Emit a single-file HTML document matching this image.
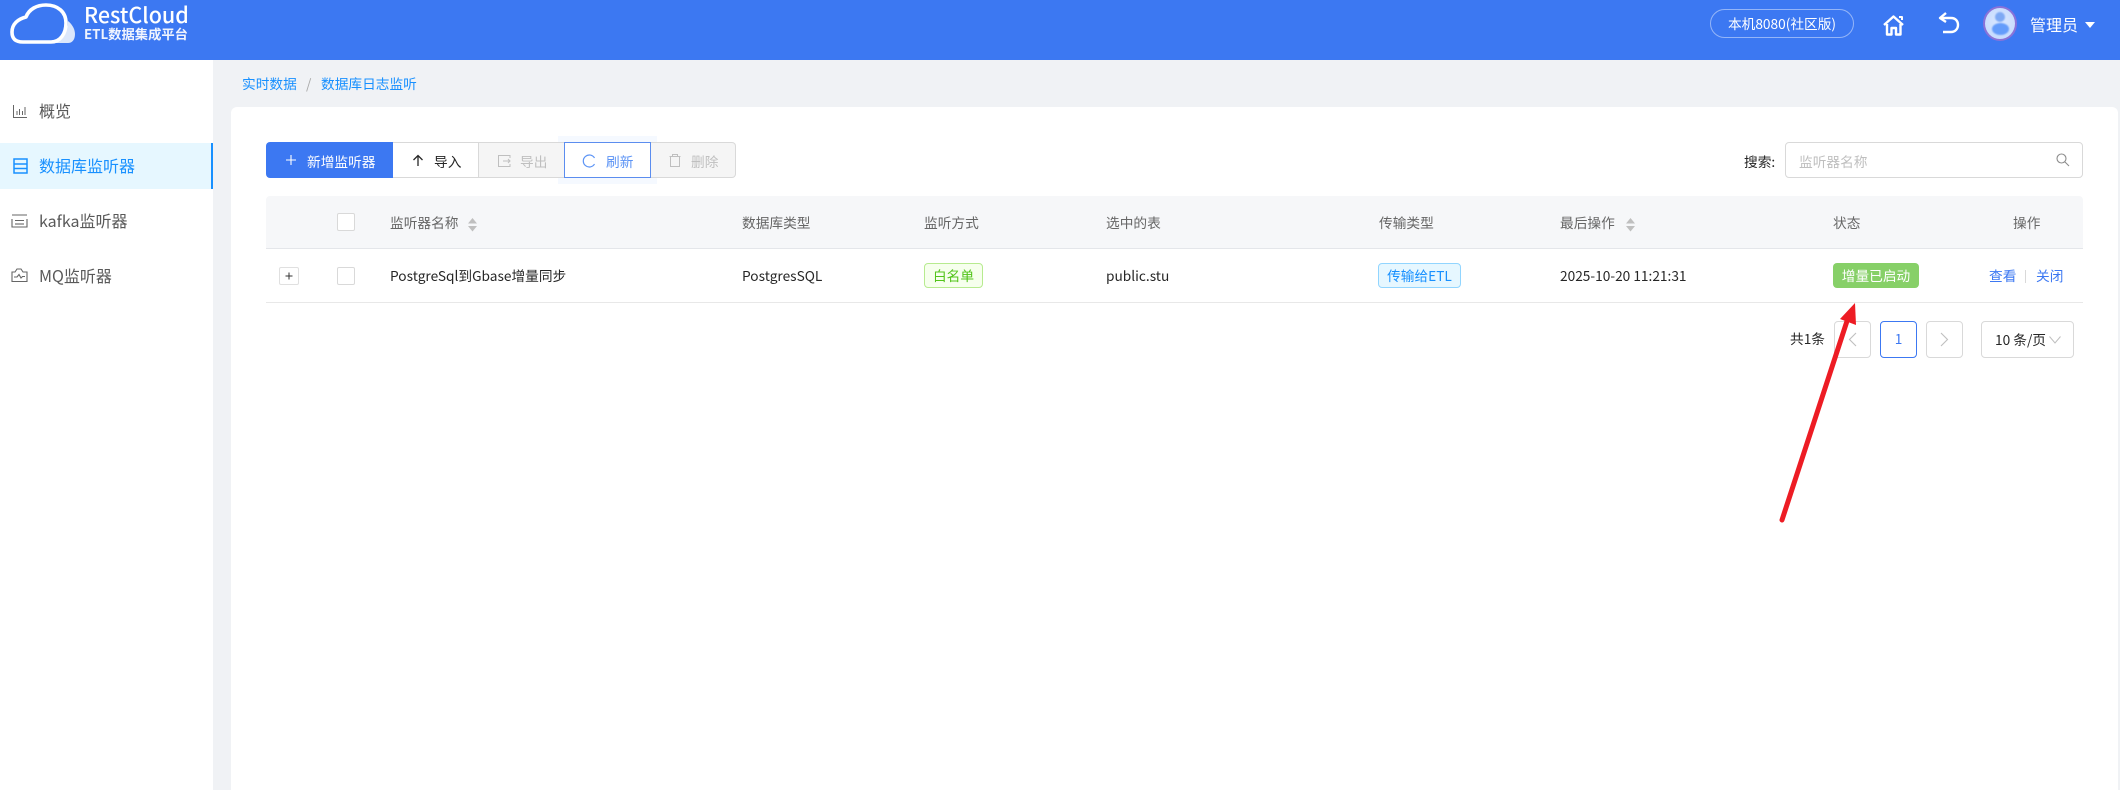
<!DOCTYPE html>
<html lang="zh-CN">
<head>
<meta charset="utf-8">
<title>数据库日志监听</title>
<style>
html,body{margin:0;padding:0;width:2120px;height:790px;overflow:hidden;background:#f0f2f5;}
body{position:relative;font-family:"Noto Sans CJK SC","Liberation Sans",sans-serif;font-size:13.7px;color:#262626;}
.a{position:absolute;box-sizing:border-box;}
.t{position:absolute;white-space:nowrap;line-height:20px;height:20px;}
svg{position:absolute;overflow:visible;}
.h{color:#666;}
.cb{position:absolute;box-sizing:border-box;width:18px;height:18px;border:1px solid #d9d9d9;border-radius:2px;background:#fff;}
.tag{position:absolute;box-sizing:border-box;height:25px;line-height:23px;border-radius:4px;text-align:center;white-space:nowrap;}
.pg{position:absolute;box-sizing:border-box;height:37px;border:1px solid #d9d9d9;border-radius:4px;background:#fff;}
.m{font-size:16px;color:#595959;}
</style>
</head>
<body>
<!-- header -->
<div class="a" style="left:0;top:0;width:2120px;height:60px;background:#3c78f2;"></div>
<svg style="left:1px;top:1px" width="200" height="60" viewBox="0 0 200 60">
  <path d="M67 20 C72 24 74 29 74 33 C74 39 71 42 67 42 H50 C60 41 67 32 67 20 Z" fill="#dce7fb"/>
  <path d="M22 41 C13 41 11 36 11 31 C11 23 17 18 25 16 C28 8 36 4 45 4 C57 4 65 11 65 22 C65 33 59 41 50 41 Z" fill="#3c78f2" stroke="#fff" stroke-width="3.6" stroke-linejoin="round"/>
</svg>
<div class="t" style="left:84px;top:1px;height:28px;line-height:28px;font-size:21.5px;font-weight:500;color:#fff;">RestCloud</div>
<div class="t" style="left:84px;top:24px;height:20px;font-size:13.3px;font-weight:700;color:#f0f4fe;">ETL数据集成平台</div>

<div class="a" style="left:1710px;top:9px;width:144px;height:29px;border:1px solid rgba(255,255,255,.45);border-radius:15px;color:#fff;text-align:center;line-height:26px;">本机8080(社区版)</div>
<svg style="left:1883px;top:14px" width="22" height="22" viewBox="0 0 22 22" fill="none" stroke="#fff" stroke-width="2.4" stroke-linejoin="round">
  <path d="M1 11 L10.5 2.5 L20 11"/>
  <path d="M4 10 V20.5 H8.5 V14 H13 V20.5 H17.5 V10"/>
  <path d="M16 3 h3 v3" stroke-width="2"/>
</svg>
<svg style="left:1937px;top:11px" width="24" height="24" viewBox="0 0 24 24" fill="none" stroke="#fff" stroke-width="2.4">
  <path d="M3 7 H14 C19 7 21 10.5 21 14 C21 18 18 21 14 21 H6"/>
  <path d="M9 2 L3 7 L9 11" stroke-linejoin="round"/>
</svg>
<div class="a" style="left:1983px;top:6px;width:34px;height:35px;border-radius:50%;background:radial-gradient(circle at 50% 45%,#dbe8ff 0,#c8dcfe 70%);border:2px solid #8a72d8;"></div>
<div class="a" style="left:1995px;top:12px;width:10px;height:10px;border-radius:50%;background:#7ea9f4;filter:blur(.8px);"></div>
<div class="a" style="left:1992px;top:23px;width:17px;height:12px;border-radius:50%;background:#649cfb;filter:blur(.8px);"></div>
<div class="t" style="left:2030px;top:14px;font-size:16px;color:#fff;">管理员</div>
<svg style="left:2085px;top:22px" width="10" height="6"><path d="M0 0 H10 L5 6 Z" fill="#fff"/></svg>

<!-- sidebar -->
<div class="a" style="left:0;top:60px;width:213px;height:730px;background:#fff;"></div>
<div class="a" style="left:0;top:143px;width:213px;height:46px;background:#e6f7ff;border-right:2px solid #1890ff;"></div>
<svg style="left:12px;top:103px" width="16" height="16" viewBox="0 0 16 16" fill="none" stroke="#666" stroke-width="1">
  <path d="M1.5 2 V14.5 H15"/><path d="M5 12 V8 M7.5 12 V6 M10.5 12 V8 M13 12 V4"/>
</svg>
<div class="t m" style="left:39px;top:100px;">概览</div>
<svg style="left:13px;top:157px" width="15" height="18" viewBox="0 0 15 18" fill="none" stroke="#1890ff" stroke-width="1.5">
  <rect x="1" y="2" width="13" height="14"/><path d="M1 7 H14 M1 11.5 H14"/>
</svg>
<div class="t m" style="left:39px;top:155px;color:#1890ff;">数据库监听器</div>
<svg style="left:11px;top:213px" width="17" height="16" viewBox="0 0 17 16" fill="none" stroke="#666" stroke-width="1.1">
  <path d="M1 2 H16 M4 7.5 H13 M1 6 V14 H16 V6"/>
  <path d="M4 11 H13"/>
</svg>
<div class="t m" style="left:39px;top:210px;">kafka监听器</div>
<svg style="left:11px;top:267px" width="17" height="16" viewBox="0 0 17 16" fill="none" stroke="#666" stroke-width="1.1">
  <path d="M1 14.5 H16 V5 H12 L10 2 H6 L4 5 H1 Z"/>
  <path d="M3 10 H6 L8 7.5 L10 11 L11.5 9.5 H14"/>
</svg>
<div class="t m" style="left:39px;top:265px;">MQ监听器</div>

<!-- breadcrumb -->
<div class="t" style="left:242px;top:73px;color:#1890ff;">实时数据</div>
<div class="t" style="left:306px;top:73px;color:#aaa;">/</div>
<div class="t" style="left:321px;top:73px;color:#1890ff;">数据库日志监听</div>

<!-- card -->
<div class="a" style="left:231px;top:107px;width:1887px;height:700px;background:#fff;border-radius:6px;"></div>

<!-- toolbar -->
<div class="a" style="left:558px;top:136px;width:99px;height:48px;background:#f5f9ff;"></div>
<div class="a" style="left:266px;top:142px;width:128px;height:36px;background:#3c78f2;border-radius:4px 0 0 4px;"></div>
<div class="a" style="left:393px;top:142px;width:86px;height:36px;background:#fff;border:1px solid #d9d9d9;border-left:0;"></div>
<div class="a" style="left:478px;top:142px;width:87px;height:36px;background:#f5f5f5;border:1px solid #d9d9d9;"></div>
<div class="a" style="left:650px;top:142px;width:86px;height:36px;background:#f5f5f5;border:1px solid #d9d9d9;border-left:0;border-radius:0 4px 4px 0;"></div>
<div class="a" style="left:564px;top:142px;width:87px;height:36px;background:#fff;border:1px solid #5b8def;"></div>
<svg style="left:285px;top:154px" width="12" height="12" fill="none" stroke="#fff" stroke-width="1.1"><path d="M6 1 V11 M1 6 H11"/></svg>
<div class="t" style="left:307px;top:151px;color:#fff;">新增监听器</div>
<svg style="left:412px;top:154px" width="12" height="13" fill="none" stroke="#262626" stroke-width="1.3"><path d="M6 12 V1.5 M1.5 6 L6 1.5 L10.5 6"/></svg>
<div class="t" style="left:434px;top:151px;">导入</div>
<svg style="left:498px;top:155px" width="13" height="12" fill="none" stroke="#bfbfbf" stroke-width="1"><path d="M12 3 V.5 H.5 V11.5 H12 V9 M5 6 H12 M10 4 L12 6 L10 8"/></svg>
<div class="t" style="left:520px;top:151px;color:#bfbfbf;">导出</div>
<svg style="left:582px;top:154px" width="14" height="14" fill="none" stroke="#5b93f5" stroke-width="1.2"><path d="M12.5 4 A6 6 0 1 0 12.5 10"/></svg>
<div class="t" style="left:606px;top:151px;color:#5b93f5;">刷新</div>
<svg style="left:669px;top:154px" width="12" height="13" fill="none" stroke="#bfbfbf" stroke-width="1"><path d="M.5 2.5 H11.5 M3.5 2.5 V.5 H8.5 V2.5 M1.5 2.5 V12.5 H10.5 V2.5"/></svg>
<div class="t" style="left:691px;top:151px;color:#bfbfbf;">删除</div>

<!-- search -->
<div class="t" style="left:1744px;top:151px;">搜索:</div>
<div class="a" style="left:1785px;top:142px;width:298px;height:36px;border:1px solid #d9d9d9;border-radius:4px;background:#fff;"></div>
<div class="t" style="left:1799px;top:151px;color:#bfbfbf;">监听器名称</div>
<svg style="left:2056px;top:153px" width="14" height="14" fill="none" stroke="#8c8c8c" stroke-width="1.1"><circle cx="5.5" cy="5.5" r="4.5"/><path d="M9 9 L13 13"/></svg>

<!-- table -->
<div class="a" style="left:266px;top:196px;width:1817px;height:53px;background:#f6f7f9;border-bottom:1px solid #e4e6ea;border-radius:4px 4px 0 0;"></div>
<div class="a" style="left:266px;top:302px;width:1817px;height:1px;background:#e8e8e8;"></div>
<div class="cb" style="left:337px;top:213px;"></div>
<div class="t h" style="left:390px;top:212px;">监听器名称</div>
<svg style="left:468px;top:218px" width="9" height="14"><path d="M4.5 0 L9 5.5 H0 Z M0 8 H9 L4.5 13.5 Z" fill="#bfbfbf"/></svg>
<div class="t h" style="left:742px;top:212px;">数据库类型</div>
<div class="t h" style="left:924px;top:212px;">监听方式</div>
<div class="t h" style="left:1106px;top:212px;">选中的表</div>
<div class="t h" style="left:1379px;top:212px;">传输类型</div>
<div class="t h" style="left:1560px;top:212px;">最后操作</div>
<svg style="left:1626px;top:218px" width="9" height="14"><path d="M4.5 0 L9 5.5 H0 Z M0 8 H9 L4.5 13.5 Z" fill="#bfbfbf"/></svg>
<div class="t h" style="left:1833px;top:212px;">状态</div>
<div class="t h" style="left:2013px;top:212px;">操作</div>

<div class="a" style="left:279px;top:267px;width:20px;height:18px;border:1px solid #e0e0e0;border-radius:2px;background:#fff;"></div>
<svg style="left:285px;top:272px" width="8" height="8" fill="none" stroke="#333" stroke-width="1"><path d="M4 .5 V7.5 M.5 4 H7.5"/></svg>
<div class="cb" style="left:337px;top:267px;"></div>
<div class="t" style="left:390px;top:265px;">PostgreSql到Gbase增量同步</div>
<div class="t" style="left:742px;top:265px;">PostgresSQL</div>
<div class="tag" style="left:924px;top:263px;width:59px;background:#f6ffed;border:1px solid #b7eb8f;color:#52c41a;">白名单</div>
<div class="t" style="left:1106px;top:265px;">public.stu</div>
<div class="tag" style="left:1378px;top:263px;width:83px;background:#e6f7ff;border:1px solid #91d5ff;color:#1890ff;">传输给ETL</div>
<div class="t" style="left:1560px;top:265px;">2025-10-20 11:21:31</div>
<div class="tag" style="left:1833px;top:263px;width:86px;background:#87d068;color:#fff;line-height:25px;">增量已启动</div>
<div class="t" style="left:1989px;top:265px;color:#3c78f2;">查看</div>
<div class="a" style="left:2025px;top:270px;width:1px;height:13px;background:#d9d9d9;"></div>
<div class="t" style="left:2036px;top:265px;color:#3c78f2;">关闭</div>

<!-- pagination -->
<div class="t" style="left:1790px;top:328px;">共1条</div>
<div class="pg" style="left:1834px;top:321px;width:37px;"></div>
<svg style="left:1848px;top:332px" width="9" height="15" fill="none" stroke="#bfbfbf" stroke-width="1.1"><path d="M8 1 L1.5 7.5 L8 14"/></svg>
<div class="pg" style="left:1880px;top:321px;width:37px;border-color:#3c78f2;color:#3c78f2;text-align:center;line-height:33px;">1</div>
<div class="pg" style="left:1926px;top:321px;width:37px;"></div>
<svg style="left:1940px;top:332px" width="9" height="15" fill="none" stroke="#bfbfbf" stroke-width="1.1"><path d="M1 1 L7.5 7.5 L1 14"/></svg>
<div class="pg" style="left:1981px;top:321px;width:93px;"></div>
<div class="t" style="left:1995px;top:329px;">10 条/页</div>
<svg style="left:2049px;top:336px" width="12" height="8" fill="none" stroke="#bfbfbf" stroke-width="1"><path d="M.5 .5 L6 7 L11.5 .5"/></svg>

<!-- red arrow -->
<svg style="left:0;top:0" width="2120" height="790">
  <path d="M1782 520 L1848 318" stroke="#ed1c24" stroke-width="5" stroke-linecap="round" fill="none"/>
  <path d="M1855 303 L1840 319 L1856 325 Z" fill="#ed1c24"/>
</svg>
</body>
</html>
